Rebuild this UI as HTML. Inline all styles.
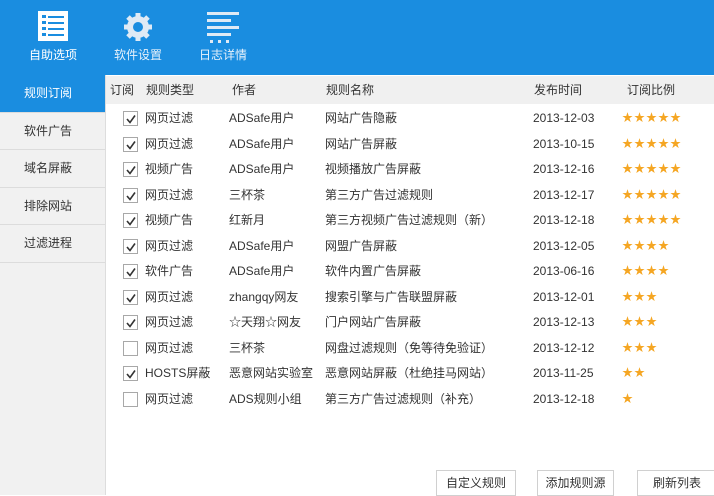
<!DOCTYPE html>
<html><head><meta charset="utf-8"><style>
*{margin:0;padding:0;box-sizing:border-box}
body{width:714px;height:495px;overflow:hidden;background:#fff;font-family:"Liberation Sans","Noto Sans CJK SC",sans-serif;font-size:12px;color:#333;position:relative}
#top{position:absolute;left:0;top:0;width:714px;height:75px;background:#1a8de0}
.tb{position:absolute;top:0;width:80px;text-align:center;color:#e8f2fb;font-size:12px}
.tb span{position:absolute;top:46px;left:0;width:80px}
#side{position:absolute;left:0;top:75px;width:106px;height:420px;background:#f1f1f1;border-right:1px solid #ddd}
.si{height:37.6px;line-height:37px;border-bottom:1px solid #dcdcdc;padding-left:24px;color:#333}
.si.on{background:#1a8de0;color:#fff}
#hd{position:absolute;left:106px;top:76px;width:608px;height:28px;background:#f0f0f0;line-height:28px}
.c{position:absolute;white-space:nowrap;top:0}
.row{position:absolute;left:106px;width:608px;height:25px;line-height:25px}
.cb{position:absolute;left:17px;top:5px;width:15px;height:15px;border:1px solid #a8a8a8;background:#fff}
.cb svg{position:absolute;left:1px;top:1px}
.st{color:#f5a623;letter-spacing:1px;font-size:11px}
.btn{position:absolute;top:470px;height:26px;border:1px solid #d0d0d0;background:#fff;text-align:center;line-height:24px;color:#333}
</style></head><body>
<div id="top">
<div class="tb" style="left:13px">
<svg style="position:absolute;left:24px;top:11px" width="32" height="30"><rect x="1" y="0" width="30" height="30" fill="#fff"/><g fill="#1a8de0"><rect x="5" y="4" width="4" height="3"/><rect x="11" y="5" width="16" height="2"/><rect x="5" y="10" width="4" height="3"/><rect x="11" y="11" width="16" height="2"/><rect x="5" y="16" width="4" height="3"/><rect x="11" y="17" width="16" height="2"/><rect x="5" y="22" width="4" height="3"/><rect x="11" y="23" width="16" height="2"/></g></svg>
<span style="color:#fff">自助选项</span></div>
<div class="tb" style="left:98px">
<svg style="position:absolute;left:24px;top:11px" width="32" height="32" viewBox="0 0 32 32"><g fill="#dfeaf5"><circle cx="16" cy="16" r="11"/><g stroke="#dfeaf5" stroke-width="5"><line x1="16" y1="2" x2="16" y2="30"/><line x1="2" y1="16" x2="30" y2="16"/><line x1="6" y1="6" x2="26" y2="26"/><line x1="26" y1="6" x2="6" y2="26"/></g></g><circle cx="16" cy="16" r="5" fill="#1a8de0"/></svg>
<span>软件设置</span></div>
<div class="tb" style="left:183px">
<svg style="position:absolute;left:24px;top:11px" width="32" height="34"><g fill="#dfeaf5"><rect x="0" y="1" width="32" height="3"/><rect x="0" y="8" width="24" height="3"/><rect x="0" y="15" width="32" height="3"/><rect x="0" y="22" width="24" height="3"/><rect x="3" y="29" width="3" height="3"/><rect x="11" y="29" width="3" height="3"/><rect x="19" y="29" width="3" height="3"/></g></svg>
<span>日志详情</span></div>
</div>
<div id="side">
<div class="si on">规则订阅</div><div class="si">软件广告</div><div class="si">域名屏蔽</div><div class="si">排除网站</div><div class="si">过滤进程</div>
</div>
<div id="hd">
<span class="c" style="left:4px">订阅</span><span class="c" style="left:40px">规则类型</span><span class="c" style="left:126px">作者</span><span class="c" style="left:220px">规则名称</span><span class="c" style="left:428px">发布时间</span><span class="c" style="left:521px">订阅比例</span>
</div>
<div id="rows"></div>
<div class="btn" style="left:436px;width:80px">自定义规则</div>
<div class="btn" style="left:537px;width:77px">添加规则源</div>
<div class="btn" style="left:637px;width:80px">刷新列表</div>
<script>
var d=[[1,"网页过滤","ADSafe用户","网站广告隐蔽","2013-12-03",5],[1,"网页过滤","ADSafe用户","网站广告屏蔽","2013-10-15",5],[1,"视频广告","ADSafe用户","视频播放广告屏蔽","2013-12-16",5],[1,"网页过滤","三杯茶","第三方广告过滤规则","2013-12-17",5],[1,"视频广告","红新月","第三方视频广告过滤规则（新）","2013-12-18",5],[1,"网页过滤","ADSafe用户","网盟广告屏蔽","2013-12-05",4],[1,"软件广告","ADSafe用户","软件内置广告屏蔽","2013-06-16",4],[1,"网页过滤","zhangqy网友","搜索引擎与广告联盟屏蔽","2013-12-01",3],[1,"网页过滤","☆天翔☆网友","门户网站广告屏蔽","2013-12-13",3],[0,"网页过滤","三杯茶","网盘过滤规则（免等待免验证）","2013-12-12",3],[1,"HOSTS屏蔽","恶意网站实验室","恶意网站屏蔽（杜绝挂马网站）","2013-11-25",2],[0,"网页过滤","ADS规则小组","第三方广告过滤规则（补充）","2013-12-18",1]];
var h="";d.forEach(function(r,i){var t=106+i*25.5;h+='<div class="row" style="top:'+t+'px"><div class="cb">'+(r[0]?'<svg width="12" height="12"><path d="M2 6 L5 9.5 L10 2.5" stroke="#333" stroke-width="1.6" fill="none"/></svg>':'')+'</div><span class="c" style="left:39px">'+r[1]+'</span><span class="c" style="left:123px">'+r[2]+'</span><span class="c" style="left:219px">'+r[3]+'</span><span class="c" style="left:427px">'+r[4]+'</span><span class="c st" style="left:516px">'+"★".repeat(r[5])+'</span></div>'});document.getElementById("rows").innerHTML=h;
</script>
</body></html>
